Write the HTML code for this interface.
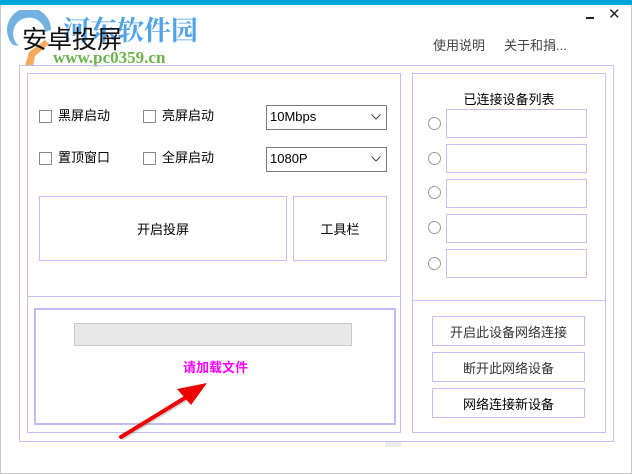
<!DOCTYPE html>
<html><head><meta charset="utf-8"><style>
*{margin:0;padding:0;box-sizing:border-box}
body{width:632px;height:474px;background:#fff;position:relative;overflow:hidden;font-family:"Liberation Sans","Microsoft YaHei","Noto Sans CJK SC",sans-serif;font-size:13px;color:#000}
.a{position:absolute}
.b{position:absolute;border:1px solid #c0c0ff}
.cb{position:absolute;width:13px;height:13px;border:1px solid #8a8a8a;background:#fff}
.t{position:absolute;font-size:13px;line-height:14px}
.sel{position:absolute;border:1px solid #7a7a7a;background:#fff;font-size:13px;padding-left:3px;line-height:22px}
.sel svg{position:absolute;right:5px;top:8px}
.c{display:flex;align-items:center;justify-content:center}
.r{position:absolute;width:13px;height:13px;border:1px solid #999;border-radius:50%}
</style></head><body>
<div class="a" style="left:0;top:0;width:632px;height:5px;background:#00a6d6"></div>
<div class="a" style="left:0;top:5px;width:1px;height:469px;background:#c8c8c8"></div>
<div class="a" style="right:0;top:5px;width:1px;height:469px;background:#c8c8c8"></div>
<div class="a" style="left:0;bottom:0;width:632px;height:1px;background:#c8c8c8"></div>
<svg class="a" style="left:5px;top:10px" width="52" height="58" viewBox="0 0 52 58">
<path d="M8 35 A22 22 0 1 1 46 20 L40 22 A16 16 0 1 0 14 36 Z" fill="#5aa3dc" opacity=".85"/>
<path d="M14 30 L26 20 L38 30 L34 30 L34 40 L18 40 L18 30Z" fill="#fff" opacity=".9"/>
<path d="M20 56 L24 42 L40 30 L44 34 L30 46 L28 56Z" fill="#f3a24a" opacity=".9"/>
</svg>
<div class="a" style="left:63px;top:9px;font:bold 27px 'Liberation Serif','Noto Serif CJK SC',serif;color:#4fa3e6;letter-spacing:0px">河东软件园</div>
<div class="a" style="left:22px;top:25px;font-size:25px;line-height:30px;color:#111">安卓投屏</div>
<div class="a" style="left:53px;top:48px;font:bold 17px 'Liberation Serif',serif;color:#6ab34a">www.pc0359.cn</div>
<div class="a" style="left:433px;top:35px;font-size:13px;color:#444">使用说明</div>
<div class="a" style="left:504px;top:35px;font-size:13px;color:#444">关于和捐...</div>
<div class="a" style="left:586px;top:17px;width:8px;height:2px;background:#222"></div>
<div class="a" style="left:608px;top:5px;font-size:15px;color:#222">✕</div>

<div class="b" style="left:19px;top:65px;width:595px;height:377px"></div>
<div class="b" style="left:27px;top:73px;width:374px;height:360px"></div>
<div class="a" style="left:27px;top:296px;width:374px;height:1px;background:#c0c0ff"></div>

<div class="cb" style="left:39px;top:110px"></div><div class="t" style="left:58px;top:109px">黑屏启动</div>
<div class="cb" style="left:143px;top:110px"></div><div class="t" style="left:162px;top:109px">亮屏启动</div>
<div class="cb" style="left:39px;top:152px"></div><div class="t" style="left:58px;top:151px">置顶窗口</div>
<div class="cb" style="left:143px;top:152px"></div><div class="t" style="left:162px;top:151px">全屏启动</div>
<div class="sel" style="left:266px;top:105px;width:121px;height:25px">10Mbps<svg width="10" height="6"><path d="M0.5 .5L5 5L9.5 .5" fill="none" stroke="#444"/></svg></div>
<div class="sel" style="left:266px;top:147px;width:121px;height:25px">1080P<svg width="10" height="6"><path d="M0.5 .5L5 5L9.5 .5" fill="none" stroke="#444"/></svg></div>
<div class="b c" style="left:39px;top:196px;width:248px;height:65px">开启投屏</div>
<div class="b c" style="left:293px;top:196px;width:94px;height:65px">工具栏</div>

<div class="a" style="left:34px;top:308px;width:362px;height:117px;border:2px solid #bcbcf8"></div>
<div class="a" style="left:74px;top:323px;width:278px;height:23px;background:#e8e8e8;border:1px solid #c8c8c8"></div>
<div class="a" style="left:183px;top:357px;font-weight:bold;color:#ff00ff;font-size:13px">请加载文件</div>
<svg class="a" style="left:115px;top:375px" width="100" height="70">
<path d="M8 63 L80 19" stroke="#888" stroke-width="4" stroke-linecap="round" opacity=".35"/>
<path d="M6 62 L78 18" stroke="#e00" stroke-width="4" stroke-linecap="round"/>
<path d="M92 8 L62 14 L76 30Z" fill="#e00"/>
</svg>

<div class="b" style="left:412px;top:73px;width:194px;height:360px"></div>
<div class="a" style="left:412px;top:300px;width:194px;height:1px;background:#c0c0ff"></div>
<div class="a" style="left:412px;top:89px;width:194px;text-align:center">已连接设备列表</div>
<div class="r" style="left:428px;top:117px"></div><div class="b" style="left:446px;top:109px;width:141px;height:29px"></div>
<div class="r" style="left:428px;top:152px"></div><div class="b" style="left:446px;top:144px;width:141px;height:29px"></div>
<div class="r" style="left:428px;top:186px"></div><div class="b" style="left:446px;top:179px;width:141px;height:29px"></div>
<div class="r" style="left:428px;top:221px"></div><div class="b" style="left:446px;top:214px;width:141px;height:29px"></div>
<div class="r" style="left:428px;top:257px"></div><div class="b" style="left:446px;top:249px;width:141px;height:29px"></div>
<div class="b c" style="left:432px;top:316px;width:153px;height:30px;color:#333">开启此设备网络连接</div>
<div class="b c" style="left:432px;top:352px;width:153px;height:30px;color:#333">断开此网络设备</div>
<div class="b c" style="left:432px;top:388px;width:153px;height:30px">网络连接新设备</div>
<div class="a" style="left:385px;top:442px;width:16px;height:5px;background:#eee"></div>
</body></html>
